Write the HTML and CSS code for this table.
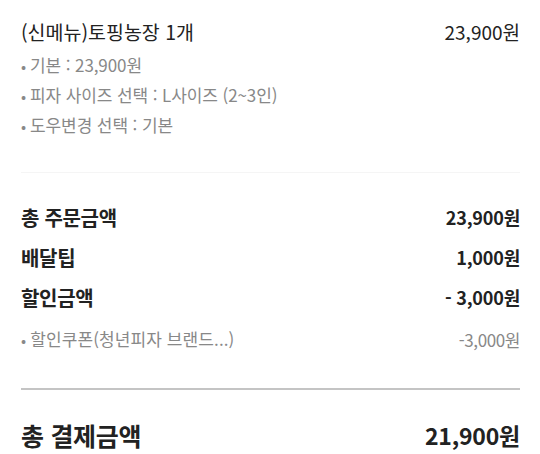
FILE: index.html
```html
<!DOCTYPE html>
<html lang="ko">
<head>
<meta charset="utf-8">
<link rel="stylesheet" href="styles.css">
</head>
<body>
<div class="page">
  <section class="menu">
    <div class="row menu-head">
      <span class="menu-name">(신메뉴)토핑농장 1개</span>
      <span class="menu-price">23,900원</span>
    </div>
    <ul class="options">
      <li>기본 : 23,900원</li>
      <li>피자 사이즈 선택 : L사이즈 (2~3인)</li>
      <li>도우변경 선택 : 기본</li>
    </ul>
  </section>
  <hr class="sep-light">
  <section class="summary">
    <div class="row sum-row"><span class="label">총 주문금액</span><span class="price">23,900원</span></div>
    <div class="row sum-row"><span class="label">배달팁</span><span class="price">1,000원</span></div>
    <div class="row sum-row"><span class="label">할인금액</span><span class="price">- 3,000원</span></div>
    <div class="row sub-row"><span class="bullet">할인쿠폰(청년피자 브랜드...)</span><span class="sub-price">-3,000원</span></div>
  </section>
  <hr class="sep-dark">
  <div class="row total"><span class="label">총 결제금액</span><span class="price">21,900원</span></div>
</div>
</body>
</html>
```
FILE: styles.css
```css
* { box-sizing: border-box; }
html, body { margin: 0; padding: 0; background: #fff; }
body {
  font-family: "Noto Sans CJK KR", "Noto Sans", sans-serif;
  color: #222;
}
.page { padding: 0 20px 0 21px; }
.row { display: flex; justify-content: space-between; align-items: center; }
.menu { padding-top: 18px; padding-bottom: 32px; }
.menu-head { height: 26px; }
.menu-name { font-size: 19.5px; }
.menu-price { font-size: 19px; }
.options { list-style: none; margin: 6px 0 0; padding: 0; }
.options li, .bullet {
  font-size: 17px; color: #888; height: 30px; line-height: 30px;
  letter-spacing: -0.1px;
}
.options li::before, .bullet::before {
  content: "•"; margin-right: 4px; font-size: 15px;
}
.sep-light { border: 0; height: 1px; background: #f5f5f5; margin: 0; }
.summary { padding-top: 24px; }
.sum-row { height: 40px; font-weight: 700; }
.sum-row .label { font-size: 20px; letter-spacing: -0.3px; }
.sum-row .price { font-size: 18px; letter-spacing: -0.2px; }
.sub-row { height: 44px; font-size: 17px; color: #888; }
.sub-row .bullet { letter-spacing: 0.1px; }
.sub-price { letter-spacing: -0.4px; }
.sep-dark { border: 0; height: 2px; background: #c4c4c4; margin: 27px 0 0; }
.total { height: 64px; font-weight: 700; padding-top: 26px; }
.total .label { font-size: 25px; letter-spacing: -0.3px; }
.total .price { font-size: 23px; letter-spacing: -0.2px; }
```
